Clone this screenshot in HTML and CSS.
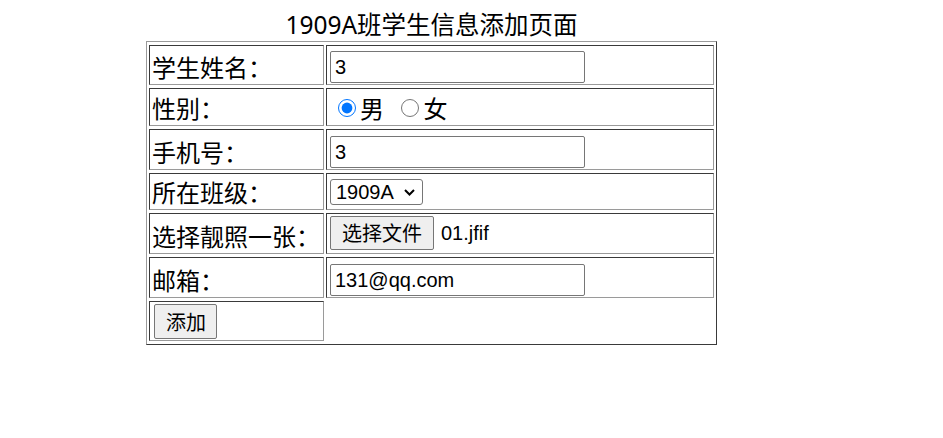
FILE: index.html
```html
<!DOCTYPE html>
<html lang="zh-CN">
<head>
<meta charset="utf-8">
<title>1909A班学生信息添加页面</title>
<link rel="stylesheet" href="styles.css">
</head>
<body>
<table class="form-table">
  <caption class="title">1909A班学生信息添加页面</caption>
  <tr class="row-h40">
    <td class="label">学生姓名：</td>
    <td class="field"><input class="text-input" type="text" value="3"></td>
  </tr>
  <tr class="row-h38">
    <td class="label">性别：</td>
    <td class="field radios">
      <label class="radio-label"><input class="radio" type="radio" name="sex" checked>男</label>
      <label class="radio-label"><input class="radio" type="radio" name="sex">女</label>
    </td>
  </tr>
  <tr class="row-h41">
    <td class="label">手机号：</td>
    <td class="field"><input class="text-input" type="text" value="3"></td>
  </tr>
  <tr class="row-h37">
    <td class="label">所在班级：</td>
    <td class="field">
      <span class="select-wrap">
        <select class="select"><option>1909A</option><option>1909B</option></select>
        <svg class="chevron" width="11" height="7" viewBox="0 0 11 7" aria-hidden="true"><polyline points="1,1 5.5,5.5 10,1" fill="none" stroke="#000" stroke-width="2"/></svg>
      </span>
    </td>
  </tr>
  <tr class="row-h41">
    <td class="label">选择靓照一张：</td>
    <td class="field"><span class="file-wrap"><button class="btn file-btn" type="button">选择文件</button><span class="file-name">01.jfif</span></span></td>
  </tr>
  <tr class="row-h41">
    <td class="label">邮箱：</td>
    <td class="field"><input class="text-input" type="text" value="131@qq.com"></td>
  </tr>
  <tr class="row-h40">
    <td class="label"><button class="btn add-btn" type="button">添加</button></td>
  </tr>
</table>
</body>
</html>
```

FILE: styles.css
```css
body {
  margin: 8px;
  background: #fff;
  color: #000;
  font-family: "Noto Sans CJK SC", sans-serif;
}

.form-table {
  margin-left: 138px;
  width: 571px;
  border-collapse: separate;
  border-spacing: 2px 3px;
  border: 1px solid;
  border-color: #9a9a9a #3a3a3a #3a3a3a #9a9a9a;
}

.title {
  font-family: "Noto Sans", "Noto Sans CJK SC", sans-serif;
  font-size: 24.5px;
  line-height: 33px;
  text-align: center;
}

.form-table td {
  border: 1px solid;
  border-color: #3a3a3a #9a9a9a #9a9a9a #3a3a3a;
  padding: 1px 2px;
  vertical-align: bottom;
  font-size: 24px;
  line-height: 33px;
}

.row-h40 { height: 40px; }
.row-h38 { height: 38px; }
.row-h41 { height: 41px; }
.row-h37 { height: 37px; }

.form-table td.label {
  width: 175px;
  box-sizing: border-box;
  white-space: nowrap;
}

.form-table td.field {
  padding-left: 3px;
}

.text-input {
  display: block;
  box-sizing: border-box;
  width: 255px;
  height: 32px;
  margin: 0;
  padding: 1px 4px;
  border: 1px solid #767676;
  border-radius: 2px;
  font-family: "Liberation Sans", Arial, sans-serif;
  font-size: 20px;
  color: #000;
  background: #fff;
}

.radios {
  white-space: nowrap;
}

.radio-label {
  display: inline-flex;
  align-items: center;
  height: 33px;
  vertical-align: top;
  margin-right: 4px;
}

.radio {
  width: 18px;
  height: 18px;
  margin: 0 4px 0 8px;
}

.select-wrap {
  position: relative;
  display: block;
  width: 93px;
  height: 26px;
  margin-bottom: 3px;
}

.select {
  display: block;
  box-sizing: border-box;
  width: 93px;
  height: 26px;
  margin: 0;
  padding: 0 0 0 5px;
  -webkit-appearance: none;
  appearance: none;
  font-family: "Liberation Sans", Arial, sans-serif;
  font-size: 20px;
  color: #000;
  border: 1px solid #767676;
  border-radius: 3px;
  background: #fff;
}

.chevron {
  position: absolute;
  right: 8px;
  top: 10px;
  pointer-events: none;
}

.file-wrap {
  display: flex;
  align-items: center;
  margin-bottom: 2px;
}

.btn {
  box-sizing: border-box;
  height: 34px;
  border: 1px solid #767676;
  border-radius: 2px;
  background: #efefef;
  color: #000;
  font-family: "Noto Sans CJK SC", sans-serif;
  font-size: 20px;
  line-height: 1;
  padding: 0 11px;
}

.file-btn {
  width: 104px;
}

.file-name {
  margin-left: 7px;
  font-family: "Liberation Sans", Arial, sans-serif;
  font-size: 20px;
}

.add-btn {
  display: block;
  width: 63px;
  height: 35px;
  margin: 0 0 0 2px;
}
```
